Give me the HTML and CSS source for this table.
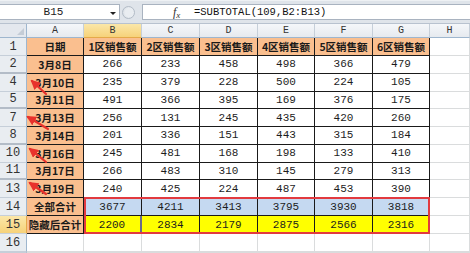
FILE: index.html
```html
<!DOCTYPE html>
<html>
<head>
<meta charset="utf-8">
<link rel="stylesheet" href="styles.css">
</head>
<body>
<div class="app">
  <div class="fbar">
    <div class="namebox"><span class="nb-text">B15</span><span class="nb-arrow"></span></div>
    <div class="grip"><span class="dot"></span></div>
    <div class="finput">
      <span class="fx">f<span class="fxx">x</span></span>
      <span class="formula">=SUBTOTAL(109,B2:B13)</span>
    </div>
  </div>
  <div class="sheet">
    <div class="corner"><span class="tri"></span></div>
    <div class="ch">A</div><div class="ch sel">B</div><div class="ch">C</div><div class="ch">D</div><div class="ch">E</div><div class="ch">F</div><div class="ch">G</div><div class="ch">H</div>

    <div class="rh">1</div>
    <div class="c hd">日期</div><div class="c hd">1区销售额</div><div class="c hd">2区销售额</div><div class="c hd">3区销售额</div><div class="c hd">4区销售额</div><div class="c hd">5区销售额</div><div class="c hd">6区销售额</div><div class="g"></div>

    <div class="rh hid">2</div>
    <div class="c hd">3月8日</div><div class="c">266</div><div class="c">233</div><div class="c">458</div><div class="c">498</div><div class="c">366</div><div class="c">479</div><div class="g"></div>

    <div class="rh">4</div>
    <div class="c hd">3月10日</div><div class="c">235</div><div class="c">379</div><div class="c">228</div><div class="c">500</div><div class="c">224</div><div class="c">105</div><div class="g"></div>

    <div class="rh hid">5</div>
    <div class="c hd">3月11日</div><div class="c">491</div><div class="c">366</div><div class="c">395</div><div class="c">169</div><div class="c">376</div><div class="c">175</div><div class="g"></div>

    <div class="rh">7</div>
    <div class="c hd">3月13日</div><div class="c">256</div><div class="c">131</div><div class="c">245</div><div class="c">435</div><div class="c">420</div><div class="c">260</div><div class="g"></div>

    <div class="rh hid">8</div>
    <div class="c hd">3月14日</div><div class="c">201</div><div class="c">336</div><div class="c">151</div><div class="c">443</div><div class="c">315</div><div class="c">184</div><div class="g"></div>

    <div class="rh">10</div>
    <div class="c hd">3月16日</div><div class="c">245</div><div class="c">481</div><div class="c">168</div><div class="c">198</div><div class="c">133</div><div class="c">410</div><div class="g"></div>

    <div class="rh hid">11</div>
    <div class="c hd">3月17日</div><div class="c">266</div><div class="c">483</div><div class="c">310</div><div class="c">145</div><div class="c">279</div><div class="c">313</div><div class="g"></div>

    <div class="rh">13</div>
    <div class="c hd">3月19日</div><div class="c">240</div><div class="c">425</div><div class="c">224</div><div class="c">487</div><div class="c">453</div><div class="c">390</div><div class="g"></div>

    <div class="rh">14</div>
    <div class="c hd">全部合计</div><div class="c b">3677</div><div class="c b">4211</div><div class="c b">3413</div><div class="c b">3795</div><div class="c b">3930</div><div class="c b">3818</div><div class="g"></div>

    <div class="rh sel">15</div>
    <div class="c hd">隐藏后合计</div><div class="c y active">2200</div><div class="c y">2834</div><div class="c y">2179</div><div class="c y">2875</div><div class="c y">2566</div><div class="c y">2316</div><div class="g"></div>

    <div class="rh">16</div>
    <div class="g"></div><div class="g"></div><div class="g"></div><div class="g"></div><div class="g"></div><div class="g"></div><div class="g"></div><div class="g"></div>

    <div class="rh rh-last"></div>
    <div class="g"></div><div class="g"></div><div class="g"></div><div class="g"></div><div class="g"></div><div class="g"></div><div class="g"></div><div class="g"></div>
  </div>
  <div class="redbox"></div>
  <svg class="arrows" width="470" height="253" viewBox="0 0 470 253">
    <defs>
      <marker id="ah" viewBox="0 0 10 10" refX="8" refY="5" markerWidth="4.5" markerHeight="4.5" orient="auto">
        <path d="M0,0 L10,5 L0,10 z" fill="#e8322c"/>
      </marker>
    </defs>
    <g stroke="#e8322c" stroke-width="2.2" stroke-linecap="round" marker-end="url(#ah)">
      <line x1="46" y1="94" x2="32" y2="81"/>
      <line x1="48" y1="129" x2="28" y2="117"/>
      <line x1="46" y1="162" x2="30" y2="149"/>
      <line x1="46" y1="194" x2="30" y2="183"/>
    </g>
  </svg>
</div>
</body>
</html>
```

FILE: styles.css
```css
html, body {
  margin: 0;
  padding: 0;
  background: #fff;
}

.app {
  position: relative;
  width: 470px;
  height: 253px;
  overflow: hidden;
  background: #fff;
}

/* formula bar */
.fbar {
  display: flex;
  height: 24px;
  box-sizing: border-box;
  padding: 3px 0 3px 0;
  background: #dfe4ea;
  border-top: 1px solid #eef1f4;
  border-bottom: 1px solid #b8c2cf;
}

.namebox {
  width: 120px;
  box-sizing: border-box;
  background: #fff;
  border: 1px solid #a9b3c0;
  border-left: none;
  display: flex;
  align-items: center;
  justify-content: center;
  position: relative;
  font: 11px "Liberation Mono", monospace;
  color: #222;
}

.nb-text {
  margin-right: 12px;
}

.nb-arrow {
  position: absolute;
  right: 3px;
  top: 7px;
  width: 0;
  height: 0;
  border-left: 3px solid transparent;
  border-right: 3px solid transparent;
  border-top: 3px solid #222;
}

.grip {
  width: 20px;
  display: flex;
  align-items: center;
  justify-content: flex-start;
  padding-left: 2px;
}

.dot {
  width: 13px;
  height: 13px;
  border-radius: 50%;
  box-sizing: border-box;
  border: 1px solid #b3bcc7;
  background: radial-gradient(circle at 60% 50%, #e9edf1 50%, #cfd6de 100%);
}

.finput {
  flex: 1;
  background: #fff;
  border: 1px solid #a9b3c0;
  border-right: none;
  display: flex;
  align-items: center;
  padding-left: 30px;
}

.fx {
  font: italic 12px "Liberation Serif", serif;
  color: #333;
  width: 20px;
}

.fxx {
  font-size: 9px;
  position: relative;
  top: 2px;
}

.formula {
  font: 10.5px "Liberation Mono", monospace;
  color: #111;
  margin-left: 1px;
}

/* sheet grid */
.sheet {
  display: grid;
  grid-template-columns: 27px 57px 58px 58px 58px 57px 58px 57px 1fr;
  grid-template-rows: 14px 18px repeat(8, 17.75px) 18px 18px 18px 1fr;
}

.corner {
  background: #e4e8ee;
  border-right: 1px solid #9eb6ce;
  border-bottom: 1px solid #9eb6ce;
  position: relative;
}

.tri {
  position: absolute;
  right: 2px;
  bottom: 2px;
  width: 0;
  height: 0;
  border-left: 7px solid transparent;
  border-bottom: 7px solid #c4ccd6;
}

.ch {
  background: linear-gradient(#f5f7fa, #e6eaef);
  border-right: 1px solid #c6cfd9;
  border-bottom: 1px solid #9eb6ce;
  display: flex;
  align-items: center;
  justify-content: center;
  font: 10px "Liberation Mono", monospace;
  color: #333;
}

.ch.sel {
  background: linear-gradient(#fbe7a9, #f6d27a);
  border-bottom: 1px solid #e5a94a;
}

.rh {
  background: #e9edf1;
  border-right: 1px solid #9eb6ce;
  border-bottom: 1px solid #c6cfd9;
  display: flex;
  align-items: center;
  justify-content: center;
  font: 12px "Liberation Mono", monospace;
  color: #333;
}

.rh.hid {
  border-bottom: 2px solid #b3bcc7;
}

.rh.sel {
  background: linear-gradient(#fbe7a9, #f6d27a);
  border-right: 1px solid #e5a94a;
}

.c {
  border-right: 1px solid #1a1a1a;
  border-bottom: 1px solid #1a1a1a;
  display: flex;
  align-items: center;
  justify-content: center;
  font: 11px "Liberation Mono", monospace;
  color: #1d1d1d;
  background: #fff;
}

.c.hd {
  background: #fabf8f;
  font: bold 10.5px "Noto Sans CJK SC", "Liberation Sans", sans-serif;
  color: #1a1a1a;
}

.c.b {
  background: #c5d9f1;
}

.c.y {
  background: #ffff00;
}

.c.active {
  border-right: 2px solid #6b6b8a;
}

.g {
  border-right: 1px solid #dadcdd;
  border-bottom: 1px solid #dadcdd;
}

/* overlays */
.redbox {
  position: absolute;
  left: 84px;
  top: 197px;
  width: 346px;
  height: 37px;
  box-sizing: border-box;
  border: 2px solid #e23a3f;
}

.arrows {
  position: absolute;
  left: 0;
  top: 0;
  pointer-events: none;
}
```
